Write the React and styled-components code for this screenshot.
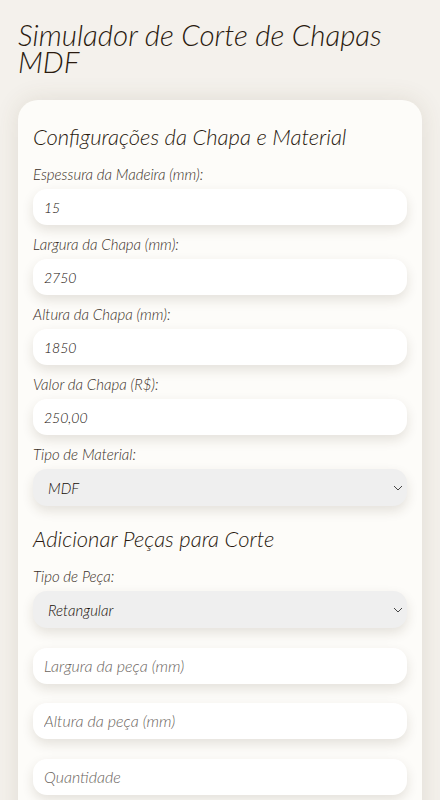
import React from 'react';
import styled, { createGlobalStyle } from 'styled-components';

const GlobalStyle = createGlobalStyle`
  html, body {
    margin: 0;
    padding: 0;
    background: #f4f1ec;
  }
  body {
    font-family: "Lato", "Open Sans", sans-serif;
    font-style: italic;
    font-weight: 300;
    color: #2a1a0f;
  }
  * { box-sizing: border-box; }
`;

const Page = styled.div`
  padding: 21px 18px 40px;
`;

const Title = styled.h1`
  margin: 0 0 25px;
  font-size: 29.5px;
  line-height: 27px;
  font-weight: 300;
  font-style: italic;
  color: #2a1a0f;
`;

const Card = styled.div`
  background: #fdfcf9;
  border-radius: 20px;
  padding: 23px 15px 30px;
  box-shadow: 0 0 24px rgba(90, 70, 40, 0.12);
`;

const SectionTitle = styled.h2`
  margin: ${p => (p.$first ? '0' : '19px')} 0 14px;
  font-size: 22px;
  line-height: 28px;
  font-weight: 300;
  font-style: italic;
  color: #2a1a0f;
`;

const Field = styled.div`
  display: flex;
  flex-direction: column;
  gap: 6px;
  margin-bottom: 10px;
`;

const Label = styled.label`
  font-size: 15px;
  line-height: 18px;
  color: #3b3028;
`;

const Input = styled.input`
  width: 100%;
  height: 36px;
  border: none;
  outline: none;
  border-radius: 14px;
  background: #ffffff;
  padding: 0 11px;
  font-family: inherit;
  font-style: italic;
  font-weight: 300;
  font-size: 14px;
  color: #140c06;
  box-shadow: 0 5px 12px rgba(60, 45, 25, 0.13);
  margin-bottom: ${p => p.$gap || 0}px;
  &::placeholder {
    font-size: 16px;
    color: #6b6560;
  }
`;

const SelectBox = styled.div`
  height: 37px;
  border-radius: 14px;
  background: #efefef;
  box-shadow: 0 5px 12px rgba(60, 45, 25, 0.13);
  display: flex;
  align-items: center;
  padding: 0 4px 0 15px;
  font-size: 15px;
  color: #140c06;
  margin-bottom: ${p => p.$gap || 0}px;
`;

const Chevron = styled.svg`
  margin-left: auto;
  width: 10px;
  height: 6px;
`;

const Select = ({ value, gap }) => (
  <SelectBox $gap={gap}>
    {value}
    <Chevron viewBox="0 0 10 6">
      <path d="M1 1l4 4 4-4" fill="none" stroke="#333" strokeWidth="0.9" />
    </Chevron>
  </SelectBox>
);

const sheetFields = [
  { label: 'Espessura da Madeira (mm):', value: '15' },
  { label: 'Largura da Chapa (mm):', value: '2750' },
  { label: 'Altura da Chapa (mm):', value: '1850' },
  { label: 'Valor da Chapa (R$):', value: '250,00' },
];

export default function App() {
  return (
    <Page>
      <GlobalStyle />
      <Title>Simulador de Corte de Chapas MDF</Title>
      <Card>
        <SectionTitle $first>Configurações da Chapa e Material</SectionTitle>
        {sheetFields.map(f => (
          <Field key={f.label}>
            <Label>{f.label}</Label>
            <Input defaultValue={f.value} />
          </Field>
        ))}
        <Field style={{ marginBottom: 0 }}>
          <Label>Tipo de Material:</Label>
          <Select value="MDF" />
        </Field>

        <SectionTitle>Adicionar Peças para Corte</SectionTitle>
        <Field>
          <Label>Tipo de Peça:</Label>
          <Select value="Retangular" gap={10} />
        </Field>
        <Input placeholder="Largura da peça (mm)" $gap={19} />
        <Input placeholder="Altura da peça (mm)" $gap={20} />
        <Input placeholder="Quantidade" $gap={20} />
        <Input placeholder="Quantidade" $gap={0} />
      </Card>
    </Page>
  );
}
